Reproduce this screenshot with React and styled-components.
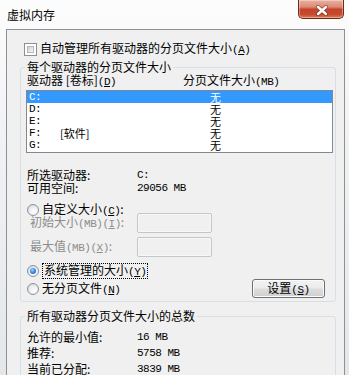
import React from 'react';
import styled, { createGlobalStyle } from 'styled-components';

const Global = createGlobalStyle`
  html, body { margin: 0; padding: 0; }
  body {
    width: 349px; height: 375px; overflow: hidden;
    font-family: "Noto Sans CJK SC", "Noto Sans", sans-serif;
    font-size: 12px; color: #000;
  }
`;

const Window = styled.div`
  width: 349px; height: 375px; overflow: hidden;
  display: flex; flex-direction: column;
  background: linear-gradient(180deg, #fdfdfd 0%, #f1f2f4 35%, #e4e7ea 100%);
`;

const TitleBar = styled.div`
  flex: none; height: 29px;
  display: flex; justify-content: space-between; align-items: flex-start;
  padding: 0 5px 0 7px;
`;

const Title = styled.div`
  margin-top: 8px; line-height: 14px; font-size: 12px; color: #000;
`;

const CloseBtn = styled.div`
  width: 46px; height: 19px; box-sizing: border-box;
  border: 1px solid #6e2a1c; border-top: none;
  border-radius: 0 0 5px 5px;
  background: linear-gradient(180deg, #eab0a1 0%, #dc8b77 38%, #c4442a 52%, #c64a2e 80%, #de7d55 100%);
  box-shadow: inset 0 0 0 1px rgba(255,255,255,0.35);
  display: flex; align-items: center; justify-content: center;
  padding: 2px 0 0 2px;
`;

const Panel = styled.div`
  flex: 1; min-height: 0;
  margin: 0 4px 0 6px;
  border: 1px solid #8d9196; border-bottom: none;
  background: #f0f0f0;
  padding: 0 8px 0 13px;
  display: flex; flex-direction: column;
`;

const Lat = styled.span`
  font-family: "Liberation Mono", "DejaVu Sans Mono", monospace;
  font-size: 11px; letter-spacing: -0.5px;
`;

const U = styled.span`
  text-decoration: underline;
`;

const CheckRow = styled.label`
  margin-top: 12px; height: 14px; padding-left: 4px;
  display: flex; align-items: center; gap: 3px; line-height: 14px;
`;

const CheckBox = styled.span`
  width: 13px; height: 13px; box-sizing: border-box; flex: none;
  border: 1px solid #8e8f8f; background: #fff; padding: 2px;
  display: flex;
`;

const CheckInner = styled.span`
  flex: 1;
  border: 1px solid #b4b8bd;
  background: linear-gradient(135deg, #cdd1d6 0%, #e6e8ea 60%, #f7f7f7 100%);
`;

const Group = styled.fieldset`
  margin: ${p => p.$top}px 0 0 0;
  padding: 0 10px 3px 6px;
  border: 1px solid #d5dfe5;
  border-radius: 3px;
  min-width: 0;
  display: flex; flex-direction: column;
`;

const Legend = styled.legend`
  padding: 0 2px; margin-left: -2px;
  line-height: 14px; height: 14px; font-size: 12px; color: #000;
`;

const Header = styled.div`
  height: 12px; line-height: 12px;
  display: grid; grid-template-columns: 156px 1fr;
`;

const ListBox = styled.div`
  margin: 4px 0 0 -1px; width: 307px; height: 63px; box-sizing: border-box;
  border: 1px solid #828790; background: #fff;
  display: flex; flex-direction: column;
`;

const ListRow = styled.div`
  height: 12px; line-height: 12px; padding-left: 2px; font-size: 11px;
  display: grid; grid-template-columns: 31px 150px 1fr; align-items: center;
  background: ${p => (p.$sel ? '#3399ff' : 'transparent')};
  color: ${p => (p.$sel ? '#fff' : '#000')};
`;

const InfoRow = styled.div`
  height: ${p => p.$h}px; line-height: 12px;
  margin-top: ${p => p.$top || 0}px;
  display: grid; grid-template-columns: 110px 1fr; align-items: center;
`;

const RadioRow = styled.div`
  height: ${p => p.$h}px; margin-top: ${p => p.$top || 0}px;
  display: flex; align-items: center; justify-content: space-between;
`;

const RadioLabel = styled.label`
  display: flex; align-items: center; gap: 3px; line-height: 14px;
`;

const Radio = styled.span`
  width: 12px; height: 12px; box-sizing: border-box; flex: none;
  border-radius: 50%; border: 1px solid #8e9297;
  background: radial-gradient(circle at 60% 65%, #ffffff 0%, #eef0f2 45%, #c9ced3 100%);
  display: flex; align-items: center; justify-content: center;
`;

const Dot = styled.span`
  width: 6px; height: 6px; border-radius: 50%;
  background: radial-gradient(circle at 40% 35%, #9fd6ff 0%, #3a8ee8 45%, #1b4fae 100%);
`;

const Focus = styled.span`
  border: 1px dotted #000; padding: 0 1px; line-height: 12px;
`;

const FieldRow = styled.div`
  height: 20px; margin-top: ${p => p.$top || 0}px;
  display: grid; grid-template-columns: 110px 75px; align-items: center;
`;

const DimLabel = styled.span`
  padding-left: 3px; color: #8c8c8c; line-height: 14px;
`;

const TextInput = styled.div`
  height: 20px; box-sizing: border-box;
  border: 1px solid #c3c7cb; border-radius: 2px;
  background: #f0f0f0;
  box-shadow: inset 0 0 0 1px #f7f7f7;
`;

const Button = styled.button`
  width: 73px; height: 19px; box-sizing: border-box; padding: 0;
  border: 1px solid #707070; border-radius: 3px;
  background: linear-gradient(180deg, #f2f2f2 0%, #ebebeb 48%, #dddddd 52%, #cfcfcf 100%);
  box-shadow: inset 0 0 0 1px #fbfbfb;
  font-family: inherit; font-size: 12px; line-height: 14px; color: #000;
`;

const drives = [
  { d: 'C:', label: '', size: '无', sel: true },
  { d: 'D:', label: '', size: '无' },
  { d: 'E:', label: '', size: '无' },
  { d: 'F:', label: '[软件]', size: '无' },
  { d: 'G:', label: '', size: '无' },
];

export default function App() {
  return (
    <>
      <Global />
      <Window>
        <TitleBar>
          <Title>虚拟内存</Title>
          <CloseBtn>
            <svg width="14" height="11" viewBox="0 0 14 11">
              <path d="M3 2 L11 9 M11 2 L3 9" stroke="#5a2418" strokeWidth="4" strokeLinecap="round" opacity="0.55" />
              <path d="M3 2 L11 9 M11 2 L3 9" stroke="#ffffff" strokeWidth="2.4" strokeLinecap="round" />
            </svg>
          </CloseBtn>
        </TitleBar>
        <Panel>
          <CheckRow>
            <CheckBox><CheckInner /></CheckBox>
            <span>自动管理所有驱动器的分页文件大小<Lat>(<U>A</U>)</Lat></span>
          </CheckRow>

          <Group $top={4}>
            <Legend>每个驱动器的分页文件大小</Legend>
            <Header>
              <span>驱动器 [卷标]<Lat>(<U>D</U>)</Lat></span>
              <span>分页文件大小<Lat>(MB)</Lat></span>
            </Header>
            <ListBox>
              {drives.map(r => (
                <ListRow key={r.d} $sel={r.sel}>
                  <Lat>{r.d}</Lat>
                  <span>{r.label}</span>
                  <span>{r.size}</span>
                </ListRow>
              ))}
            </ListBox>

            <InfoRow $h={13} $top={15}>
              <span>所选驱动器:</span>
              <Lat>C:</Lat>
            </InfoRow>
            <InfoRow $h={13}>
              <span>可用空间:</span>
              <Lat>29056 MB</Lat>
            </InfoRow>

            <RadioRow $h={6} $top={13}>
              <RadioLabel>
                <Radio />
                <span>自定义大小<Lat>(<U>C</U>)</Lat>:</span>
              </RadioLabel>
            </RadioRow>
            <FieldRow>
              <DimLabel>初始大小<Lat>(MB)(<U>I</U>)</Lat>:</DimLabel>
              <TextInput />
            </FieldRow>
            <FieldRow $top={4}>
              <DimLabel>最大值<Lat>(MB)(<U>X</U>)</Lat>:</DimLabel>
              <TextInput />
            </FieldRow>

            <RadioRow $h={14} $top={7}>
              <RadioLabel>
                <Radio><Dot /></Radio>
                <Focus>系统管理的大小<Lat>(<U>Y</U>)</Lat></Focus>
              </RadioLabel>
            </RadioRow>
            <RadioRow $h={19} $top={1}>
              <RadioLabel>
                <Radio />
                <span>无分页文件<Lat>(<U>N</U>)</Lat></span>
              </RadioLabel>
              <Button>设置<Lat>(<U>S</U>)</Lat></Button>
            </RadioRow>
          </Group>

          <Group $top={7}>
            <Legend>所有驱动器分页文件大小的总数</Legend>
            <InfoRow $h={16} $top={6}>
              <span>允许的最小值:</span>
              <Lat>16 MB</Lat>
            </InfoRow>
            <InfoRow $h={16}>
              <span>推荐:</span>
              <Lat>5758 MB</Lat>
            </InfoRow>
            <InfoRow $h={15}>
              <span>当前已分配:</span>
              <Lat>3839 MB</Lat>
            </InfoRow>
          </Group>
        </Panel>
      </Window>
    </>
  );
}
